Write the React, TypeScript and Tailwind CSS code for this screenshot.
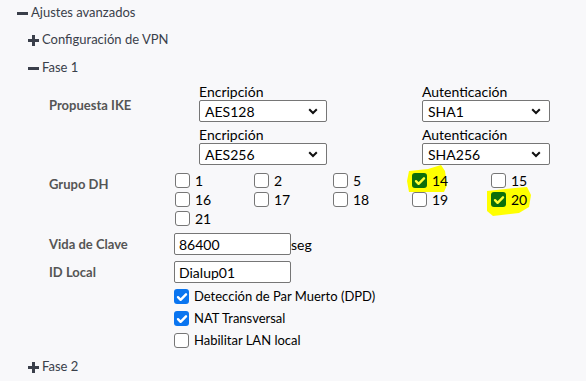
import React from "react";

type Box = { n: string; checked?: boolean; mark?: "a" | "b" };

const dhRows: Box[][] = [
  [{ n: "1" }, { n: "2" }, { n: "5" }, { n: "14", checked: true, mark: "a" }, { n: "15" }],
  [{ n: "16" }, { n: "17" }, { n: "18" }, { n: "19" }, { n: "20", checked: true, mark: "b" }],
  [{ n: "21" }],
];

function Check({ color = "white" }: { color?: string }) {
  return (
    <svg viewBox="0 0 14 14" className="h-[14px] w-[14px]">
      <path d="M3 7.2l2.6 2.6L11 4.3" fill="none" stroke={color} strokeWidth="2.4" strokeLinecap="round" strokeLinejoin="round" />
    </svg>
  );
}

function Tick({ state }: { state: "off" | "blue" | "green" }) {
  if (state === "blue")
    return (
      <span className="flex h-[15px] w-[15px] shrink-0 items-center justify-center rounded-[3px] bg-[#0a75f0]">
        <Check />
      </span>
    );
  if (state === "green")
    return (
      <span className="flex h-[15px] w-[15px] shrink-0 items-center justify-center rounded-[3px] bg-[#0b6e0b]">
        <Check color="#ffff33" />
      </span>
    );
  return <span className="block h-[15px] w-[15px] shrink-0 rounded-[3px] border border-[#767676] bg-white" />;
}

function Plus() {
  return (
    <svg viewBox="0 0 11 11" className="mr-[3px] h-[11px] w-[11px]">
      <path d="M0 4h11v3H0zM4 0h3v11H4z" fill="#3a3f4a" />
    </svg>
  );
}

function Minus() {
  return (
    <svg viewBox="0 0 11 11" className="mr-[3px] h-[11px] w-[11px]">
      <path d="M0 4h11v3H0z" fill="#3a3f4a" />
    </svg>
  );
}

function Select({ value }: { value: string }) {
  return (
    <div className="flex h-[22px] w-[128px] items-center justify-between rounded-[2px] border border-[#767676] bg-white pl-[5px] pr-[8px] text-[14px] text-black">
      <span>{value}</span>
      <svg viewBox="0 0 10 7" className="h-[7px] w-[10px]">
        <path d="M1.2 1.2L5 5l3.8-3.8" fill="none" stroke="#111" strokeWidth="2" />
      </svg>
    </div>
  );
}

function Field({ label, value, wide }: { label: string; value: string; wide?: boolean }) {
  return (
    <div className={`flex shrink-0 flex-col ${wide ? "w-[223px]" : "w-[128px]"}`}>
      <span className="h-[16px] text-[14px] leading-[16px] text-black">{label}</span>
      <Select value={value} />
    </div>
  );
}

function Blob({ kind }: { kind: "a" | "b" }) {
  if (kind === "a")
    return (
      <svg className="absolute left-[-6px] top-[-8px] h-[28px] w-[46px]" viewBox="0 0 46 28">
        <path d="M3 6L22 4L35 0L39 6L41 20L38 27L3 27L1 16Z" fill="#ffff00" />
      </svg>
    );
  return (
    <svg className="absolute left-[-6px] top-[-5px] h-[30px] w-[48px]" viewBox="0 0 48 30">
      <path d="M2 4L30 1L42 0L46 8L44 20L34 26L8 29L2 24Z" fill="#ffff00" />
    </svg>
  );
}

export default function App() {
  return (
    <div className="h-[381px] w-[586px] overflow-hidden bg-[#f8f8fa] font-['Lato','Liberation_Sans',sans-serif] text-[13px] text-[#3a3f4a]">
      <div className="flex h-[26px] items-center pl-[17px]">
        <Minus />
        <span>Ajustes avanzados</span>
      </div>
      <div className="flex h-[28px] items-center pl-[28px]">
        <Plus />
        <span>Configuración de VPN</span>
      </div>
      <div className="flex h-[28px] items-center pl-[28px]">
        <Minus />
        <span>Fase 1</span>
      </div>

      <div className="mt-[2px] flex pl-[49px]">
        <div className="w-[150px] shrink-0 pt-[12px] font-bold text-[#555]">Propuesta IKE</div>
        <div className="flex flex-col gap-[5px]">
          <div className="flex">
            <Field label="Encripción" value="AES128" wide />
            <Field label="Autenticación" value="SHA1" />
          </div>
          <div className="flex">
            <Field label="Encripción" value="AES256" wide />
            <Field label="Autenticación" value="SHA256" />
          </div>
        </div>
      </div>

      <div className="mt-[8px] flex pl-[49px]">
        <div className="w-[126px] shrink-0 pt-[2px] font-bold text-[#555]">Grupo DH</div>
        <div className="flex flex-col gap-[4px]">
          {dhRows.map((row, i) => (
            <div key={i} className="flex">
              {row.map((b) => (
                <label key={b.n} className="relative flex h-[15px] w-[79px] shrink-0 items-center gap-[5px] text-[14px] text-black">
                  {b.mark && <Blob kind={b.mark} />}
                  <span className="relative flex">
                    <Tick state={b.checked ? "green" : "off"} />
                  </span>
                  <span className="relative">{b.n}</span>
                </label>
              ))}
            </div>
          ))}
        </div>
      </div>

      <div className="mt-[7px] flex items-center pl-[49px]">
        <div className="w-[125px] shrink-0 pt-[2px] font-bold text-[#555]">Vida de Clave</div>
        <div className="flex h-[22px] w-[117px] items-center rounded-[2px] border border-[#767676] bg-white px-[4px] text-[14px] text-black">86400</div>
        <span className="text-[14px] text-black">seg</span>
      </div>

      <div className="mt-[6px] flex items-center pl-[49px]">
        <div className="w-[125px] shrink-0 pt-[2px] font-bold text-[#555]">ID Local</div>
        <div className="flex h-[22px] w-[117px] items-center rounded-[2px] border border-[#767676] bg-white px-[4px] text-[14px] text-black">Dialup01</div>
      </div>

      <div className="mt-[6px] flex flex-col gap-[7px] pl-[174px] text-black">
        <div className="flex h-[15px] items-center gap-[5px]">
          <Tick state="blue" />
          <span>Detección de Par Muerto (DPD)</span>
        </div>
        <div className="flex h-[15px] items-center gap-[5px]">
          <Tick state="blue" />
          <span>NAT Transversal</span>
        </div>
        <div className="flex h-[15px] items-center gap-[5px]">
          <Tick state="off" />
          <span>Habilitar LAN local</span>
        </div>
      </div>

      <div className="mt-[5px] flex h-[28px] items-center pl-[28px]">
        <Plus />
        <span>Fase 2</span>
      </div>
    </div>
  );
}
